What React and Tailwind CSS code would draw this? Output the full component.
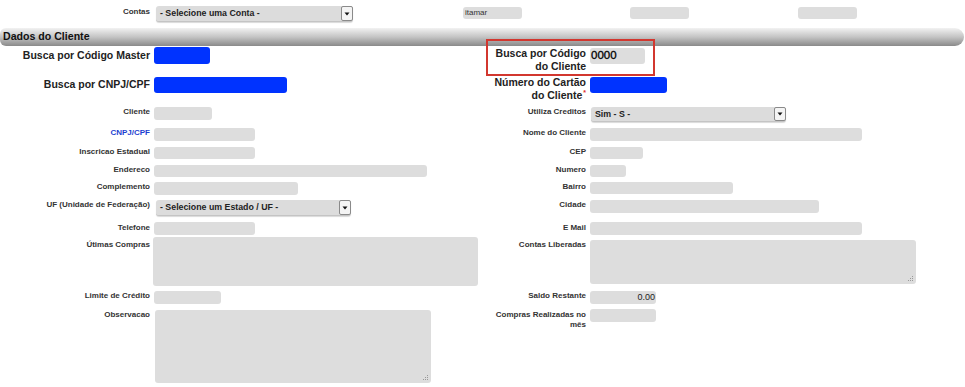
import React from 'react';

const font = { fontFamily: '"Liberation Sans", Arial, sans-serif' };

function Label({ children, big, blue, className = '' }) {
  if (big) {
    return (
      <div className={`text-right text-[10.5px] leading-[13px] font-bold text-[#222] ${className}`}>
        {children}
      </div>
    );
  }
  return (
    <div className={`text-right text-[8px] leading-[10px] font-bold ${blue ? 'text-[#1d3fd0]' : 'text-[#333]'} ${className}`}>
      {children}
    </div>
  );
}

function Field({ className = '', children }) {
  return <div className={`bg-[#dddddd] rounded-[3px] ${className}`}>{children}</div>;
}

function Grip() {
  return (
    <svg className="absolute right-[2px] bottom-[2px]" width="7" height="7" viewBox="0 0 7 7">
      <rect x="5" y="1" width="1" height="1" fill="#999" />
      <rect x="3" y="3" width="1" height="1" fill="#999" />
      <rect x="5" y="3" width="1" height="1" fill="#999" />
      <rect x="1" y="5" width="1" height="1" fill="#999" />
      <rect x="3" y="5" width="1" height="1" fill="#999" />
      <rect x="5" y="5" width="1" height="1" fill="#999" />
    </svg>
  );
}

function Select({ text, className = '' }) {
  return (
    <div className={`relative flex items-center bg-[#dcdcdc] rounded-[3px] border-b border-[#c4c4c4] shadow-[0_1px_1px_rgba(0,0,0,0.15)] ${className}`}>
      <span className="pl-[4px] text-[8.8px] font-bold text-[#222] leading-none">{text}</span>
      <div className="absolute right-0 top-0 bottom-0 w-[12px] bg-[#f4f4f4] border border-[#8a8a8a] rounded-[2px] flex items-center justify-center">
        <svg width="6" height="4" viewBox="0 0 6 4">
          <path d="M0.5 0.5 L5.5 0.5 L3 3.5 Z" fill="#111" />
        </svg>
      </div>
    </div>
  );
}

export default function App() {
  return (
    <div className="w-[965px] h-[387px] bg-white overflow-hidden relative" style={font}>
      {/* top row */}
      <div className="flex items-start pt-[6px] h-[28px]">
        <div className="w-[150px] text-right text-[8px] leading-[10px] font-bold text-[#333] pt-[1px]">Contas</div>
        <Select text="- Selecione uma Conta -" className="ml-[6px] w-[197px] h-[16px]" />
        <Field className="ml-[110px] mt-[1px] w-[59px] h-[12px] flex items-center pl-[2px] text-[8px] text-[#333]">itamar</Field>
        <Field className="ml-[108px] mt-[1px] w-[59px] h-[12px]" />
        <Field className="ml-[109px] mt-[1px] w-[59px] h-[12px]" />
      </div>

      {/* section header */}
      <div className="h-[18px] w-[964px] rounded-l-[6px] rounded-r-[9px] bg-linear-to-b from-[#f2f2f2] via-[#c4c4c4] to-[#8a8a8a] flex items-center pl-[3px]">
        <span className="text-[10.6px] font-bold text-[#111]">Dados do Cliente</span>
      </div>

      {/* form grid */}
      <div className="relative mt-[1px] grid grid-cols-[150px_328px_100px_1fr] gap-x-[4px] grid-rows-[30px_30px_21px_19px_18px_17px_18px_22px_18px_51px_18px_76px]">
        <div className="absolute left-[486px] top-[-8px] w-[169px] h-[37px] border-2 border-[#d2372f] pointer-events-none" />

        <Label big className="pt-[2px]">Busca por Código Master</Label>
        <div><div className="w-[56px] h-[17px] bg-[#0033ff] rounded-[3px]" /></div>
        <Label big>Busca por Código do Cliente</Label>
        <div><Field className="mt-[1px] w-[55px] h-[16px] flex items-center pl-[1px] text-[11.5px] text-black [-webkit-text-stroke:0.3px_black]">0000</Field></div>

        <Label big className="pt-[1px]">Busca por CNPJ/CPF</Label>
        <div><div className="w-[133px] h-[16px] bg-[#0033ff] rounded-[3px]" /></div>
        <Label big className="-mt-[1px]">
          Número do Cartão do Cliente<span className="ml-[1px] align-top leading-[8px] text-[#e0302a] text-[7px]">*</span>
        </Label>
        <div><div className="w-[77px] h-[16px] bg-[#0033ff] rounded-[3px]" /></div>

        <Label>Cliente</Label>
        <div><Field className="w-[58px] h-[13px]" /></div>
        <Label>Utiliza Creditos</Label>
        <div><Select text="Sim - S -" className="ml-[1px] w-[195px] h-[15px]" /></div>

        <Label blue>CNPJ/CPF</Label>
        <div><Field className="w-[101px] h-[13px]" /></div>
        <Label>Nome do Cliente</Label>
        <div><Field className="w-[272px] h-[13px]" /></div>

        <Label>Inscricao Estadual</Label>
        <div><Field className="w-[101px] h-[12px]" /></div>
        <Label>CEP</Label>
        <div><Field className="w-[53px] h-[12px]" /></div>

        <Label>Endereco</Label>
        <div><Field className="w-[273px] h-[12px]" /></div>
        <Label>Numero</Label>
        <div><Field className="w-[36px] h-[12px]" /></div>

        <Label>Complemento</Label>
        <div><Field className="w-[144px] h-[13px]" /></div>
        <Label>Bairro</Label>
        <div><Field className="w-[143px] h-[12px]" /></div>

        <Label>UF (Unidade de Federação)</Label>
        <div><Select text="- Selecione um Estado / UF -" className="ml-[2px] w-[195px] h-[16px]" /></div>
        <Label>Cidade</Label>
        <div><Field className="w-[229px] h-[13px]" /></div>

        <Label className="pt-[1px]">Telefone</Label>
        <div><Field className="w-[101px] h-[13px]" /></div>
        <Label className="pt-[1px]">E Mail</Label>
        <div><Field className="w-[272px] h-[13px]" /></div>

        <Label>Útimas Compras</Label>
        <div><Field className="-mt-[3px] -ml-[1px] w-[325px] h-[49px]" /></div>
        <Label>Contas Liberadas</Label>
        <div><Field className="relative w-[326px] h-[44px]"><Grip /></Field></div>

        <Label>Limite de Crédito</Label>
        <div><Field className="w-[67px] h-[13px]" /></div>
        <Label>Saldo Restante</Label>
        <div><Field className="w-[66px] h-[13px] flex items-center justify-end pr-[1px] text-[9px] text-[#222]">0.00</Field></div>

        <Label className="pt-[1px]">Observacao</Label>
        <div><Field className="relative mt-[1px] ml-[1px] w-[276px] h-[73px]"><Grip /></Field></div>
        <Label className="pt-[1px]">Compras Realizadas no mês</Label>
        <div><Field className="w-[66px] h-[13px]" /></div>
      </div>
    </div>
  );
}
